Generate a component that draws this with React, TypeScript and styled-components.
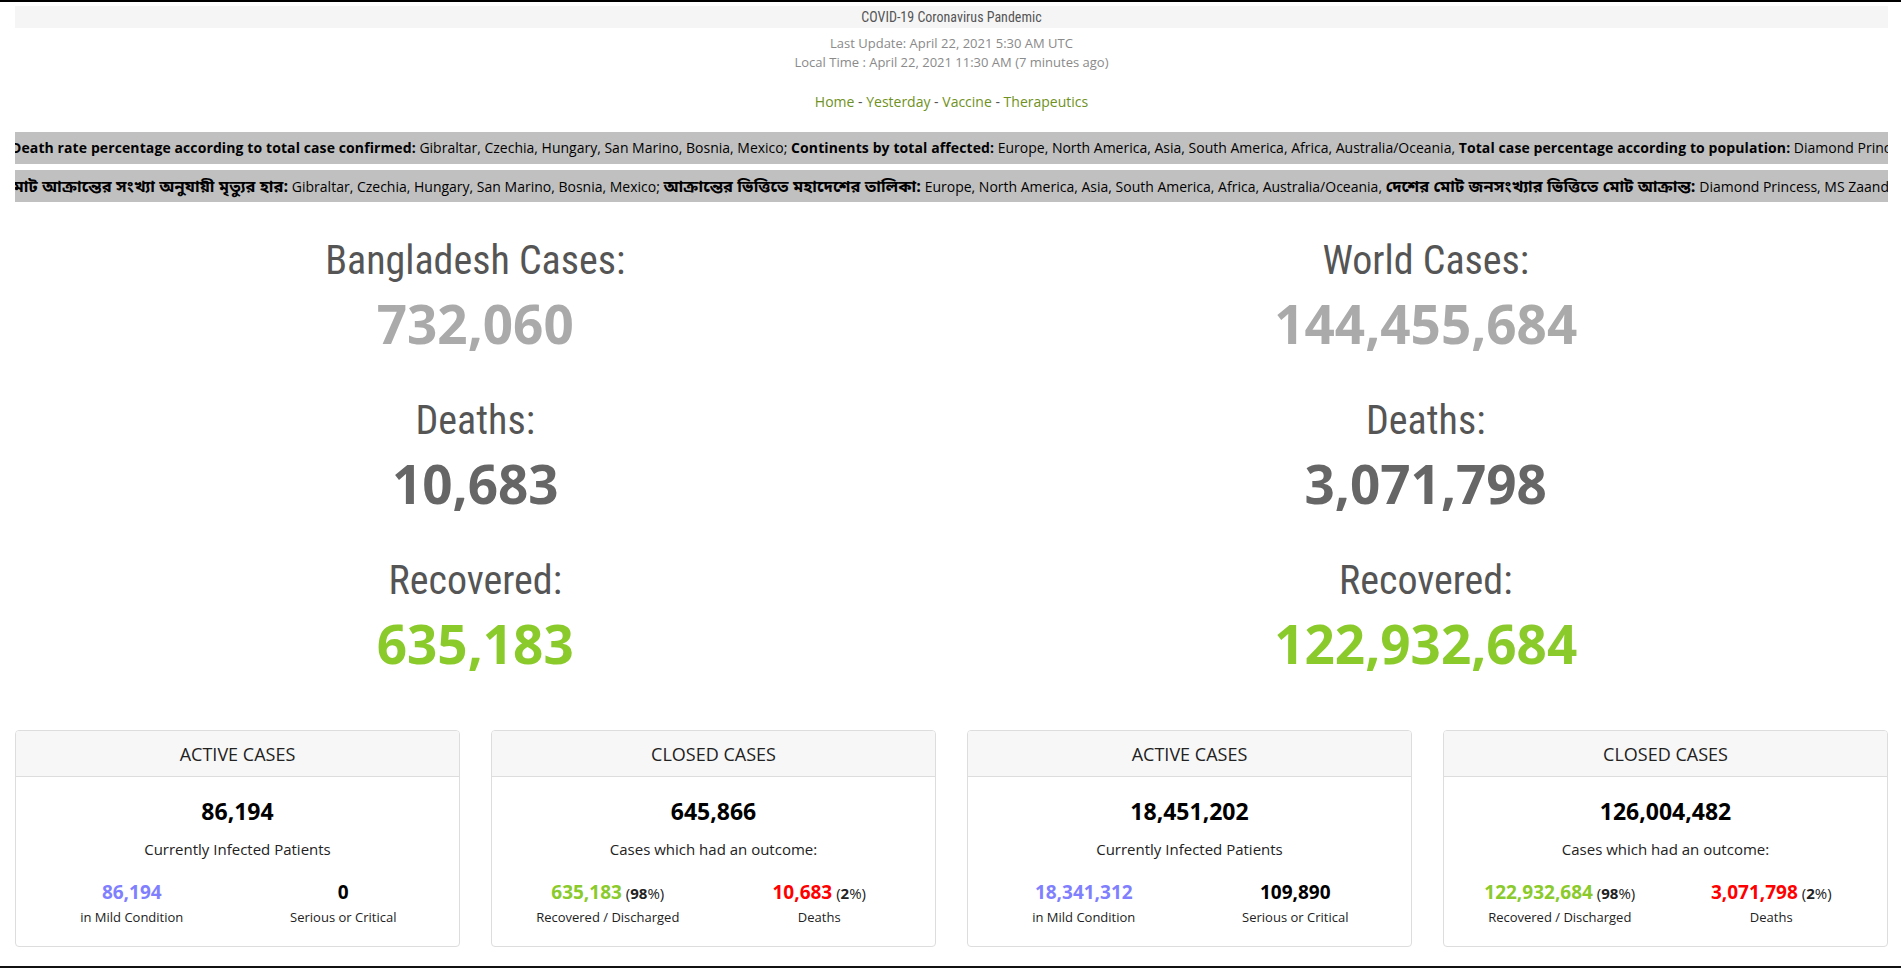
import React from "react";
import styled, { createGlobalStyle } from "styled-components";

const GlobalStyle = createGlobalStyle`
  html, body {
    margin: 0;
    padding: 0;
    background: #fff;
  }
  body {
    font-family: "Open Sans", "Noto Sans", "Noto Sans Bengali", sans-serif;
    color: #222;
  }
  * {
    box-sizing: border-box;
  }
`;

const condensed = `"Roboto Condensed", "Liberation Sans Narrow", "DejaVu Sans Condensed", Roboto, sans-serif`;

const Page = styled.div`
  height: 968px;
  overflow: hidden;
  border-top: 2px solid #000;
  border-bottom: 2px solid #111;
  padding: 0 13px 0 15px;
`;

const TitleBar = styled.div`
  margin-top: 4px;
  height: 22px;
  line-height: 22px;
  background: #f5f5f5;
  text-align: center;
  font-family: ${condensed};
  font-size: 14px;
  color: #555;
`;

const UpdateInfo = styled.div`
  margin-top: 6px;
  text-align: center;
  font-size: 13px;
  line-height: 19px;
  color: #8a8a8a;
`;

const Nav = styled.nav`
  margin-top: 20px;
  text-align: center;
  font-size: 14px;
  line-height: 20px;
  color: #555;
`;

const NavLink = styled.a`
  color: #6f9122;
  text-decoration: none;
`;

const Tickers = styled.div`
  margin-top: 20px;
  display: flex;
  flex-direction: column;
  gap: 6px;
`;

const TickerBar = styled.div<{ $shift: number }>`
  height: 32px;
  line-height: 32px;
  background: #c0c0c0;
  overflow: hidden;
  white-space: nowrap;
  font-size: 14px;
  color: #000;
  text-indent: -${(p) => p.$shift}px;

  b {
    font-weight: 700;
    letter-spacing: 0.1px;
  }
`;

const BnLabel = styled.b`
  font-size: 16.4px;
  letter-spacing: 0;
`;

const StatsGrid = styled.div`
  display: grid;
  grid-template-columns: 1fr 1fr;
  margin: 34px -13px 0 -15px;
`;

const StatsColumn = styled.div`
  display: flex;
  flex-direction: column;
  align-items: center;
`;

const Counter = styled.div`
  display: flex;
  flex-direction: column;
  align-items: center;
  margin-bottom: 34px;
`;

const CounterLabel = styled.h1`
  margin: 0;
  font-family: ${condensed};
  font-weight: 400;
  font-size: 40px;
  line-height: 50px;
  color: #555;
`;

const CounterNumber = styled.div<{ $color: string }>`
  font-family: "Open Sans", sans-serif;
  font-weight: 700;
  font-size: 53px;
  line-height: 76px;
  color: ${(p) => p.$color};
`;

const CardsRow = styled.div`
  display: grid;
  grid-template-columns: repeat(4, 1fr);
  gap: 31px;
  margin-top: 14px;
`;

const Card = styled.div`
  border: 1px solid #ddd;
  border-radius: 4px;
  background: #fff;
  overflow: hidden;
`;

const CardHeader = styled.div`
  height: 46px;
  line-height: 46px;
  background: #f7f7f7;
  border-bottom: 1px solid #ddd;
  text-align: center;
  font-size: 18px;
  color: #222;
`;

const CardBody = styled.div`
  padding: 19px 10px 20px;
  text-align: center;
`;

const Total = styled.div`
  font-size: 23px;
  font-weight: 700;
  line-height: 30px;
  color: #000;
`;

const Caption = styled.div`
  margin-top: 12px;
  font-size: 15px;
  line-height: 22px;
  color: #222;
`;

const SubRow = styled.div`
  display: grid;
  grid-template-columns: 1fr 1fr;
  margin-top: 19px;
`;

const SubItem = styled.div`
  display: flex;
  flex-direction: column;
  align-items: center;
`;

const SubNumber = styled.div`
  font-size: 15px;
  line-height: 26px;
  color: #222;
`;

const SubValue = styled.span<{ $color: string }>`
  font-size: 19px;
  font-weight: 700;
  color: ${(p) => p.$color};
`;

const SubLabel = styled.div`
  margin-top: 2px;
  font-size: 13px;
  line-height: 18px;
  color: #222;
`;

const Pct = ({ v }: { v: string }) => (
  <>
    {" ("}
    <b>{v}</b>
    {"%)"}
  </>
);

type Split = { value: string; color: string; pct?: string; label: string };
type CardData = { title: string; total: string; caption: string; left: Split; right: Split };

const PURPLE = "#8080ff";
const GREEN = "#8aca2b";
const RED = "#ff0000";

const cards: CardData[] = [
  {
    title: "ACTIVE CASES",
    total: "86,194",
    caption: "Currently Infected Patients",
    left: { value: "86,194", color: PURPLE, label: "in Mild Condition" },
    right: { value: "0", color: "#000", label: "Serious or Critical" },
  },
  {
    title: "CLOSED CASES",
    total: "645,866",
    caption: "Cases which had an outcome:",
    left: { value: "635,183", color: GREEN, pct: "98", label: "Recovered / Discharged" },
    right: { value: "10,683", color: RED, pct: "2", label: "Deaths" },
  },
  {
    title: "ACTIVE CASES",
    total: "18,451,202",
    caption: "Currently Infected Patients",
    left: { value: "18,341,312", color: PURPLE, label: "in Mild Condition" },
    right: { value: "109,890", color: "#000", label: "Serious or Critical" },
  },
  {
    title: "CLOSED CASES",
    total: "126,004,482",
    caption: "Cases which had an outcome:",
    left: { value: "122,932,684", color: GREEN, pct: "98", label: "Recovered / Discharged" },
    right: { value: "3,071,798", color: RED, pct: "2", label: "Deaths" },
  },
];

const counters = [
  { label: "Bangladesh Cases:", cases: "732,060", deaths: "10,683", recovered: "635,183" },
  { label: "World Cases:", cases: "144,455,684", deaths: "3,071,798", recovered: "122,932,684" },
];

function SplitItem({ s }: { s: Split }) {
  return (
    <SubItem>
      <SubNumber>
        <SubValue $color={s.color}>{s.value}</SubValue>
        {s.pct && <Pct v={s.pct} />}
      </SubNumber>
      <SubLabel>{s.label}</SubLabel>
    </SubItem>
  );
}

export default function App() {
  return (
    <Page>
      <GlobalStyle />
      <TitleBar>COVID-19 Coronavirus Pandemic</TitleBar>
      <UpdateInfo>
        Last Update: April 22, 2021 5:30 AM UTC
        <br />
        Local Time : April 22, 2021 11:30 AM (7 minutes ago)
      </UpdateInfo>
      <Nav>
        <NavLink href="#">Home</NavLink> - <NavLink href="#">Yesterday</NavLink> -{" "}
        <NavLink href="#">Vaccine</NavLink> - <NavLink href="#">Therapeutics</NavLink>
      </Nav>

      <Tickers>
        <TickerBar $shift={4}>
          <b>Death rate percentage according to total case confirmed:</b> Gibraltar, Czechia, Hungary, San
          Marino, Bosnia, Mexico; <b>Continents by total affected:</b> Europe, North America, Asia, South
          America, Africa, Australia/Oceania, <b>Total case percentage according to population:</b> Diamond
          Princess, MS Zaandam, Andorra, Montenegro, Czechia
        </TickerBar>
        <TickerBar $shift={8}>
          <BnLabel>মোট আক্রান্তের সংখ্যা অনুযায়ী মৃত্যুর হার:</BnLabel> Gibraltar, Czechia, Hungary, San
          Marino, Bosnia, Mexico; <BnLabel>আক্রান্তের ভিত্তিতে মহাদেশের তালিকা:</BnLabel> Europe, North
          America, Asia, South America, Africa, Australia/Oceania,{" "}
          <BnLabel>দেশের মোট জনসংখ্যার ভিত্তিতে মোট আক্রান্ত:</BnLabel> Diamond Princess, MS Zaandam,
          Andorra, Montenegro, Czechia
        </TickerBar>
      </Tickers>

      <StatsGrid>
        {counters.map((c) => (
          <StatsColumn key={c.label}>
            <Counter>
              <CounterLabel>{c.label}</CounterLabel>
              <CounterNumber $color="#aaa">{c.cases}</CounterNumber>
            </Counter>
            <Counter>
              <CounterLabel>Deaths:</CounterLabel>
              <CounterNumber $color="#666">{c.deaths}</CounterNumber>
            </Counter>
            <Counter>
              <CounterLabel>Recovered:</CounterLabel>
              <CounterNumber $color={GREEN}>{c.recovered}</CounterNumber>
            </Counter>
          </StatsColumn>
        ))}
      </StatsGrid>

      <CardsRow>
        {cards.map((c, i) => (
          <Card key={i}>
            <CardHeader>{c.title}</CardHeader>
            <CardBody>
              <Total>{c.total}</Total>
              <Caption>{c.caption}</Caption>
              <SubRow>
                <SplitItem s={c.left} />
                <SplitItem s={c.right} />
              </SubRow>
            </CardBody>
          </Card>
        ))}
      </CardsRow>
    </Page>
  );
}
